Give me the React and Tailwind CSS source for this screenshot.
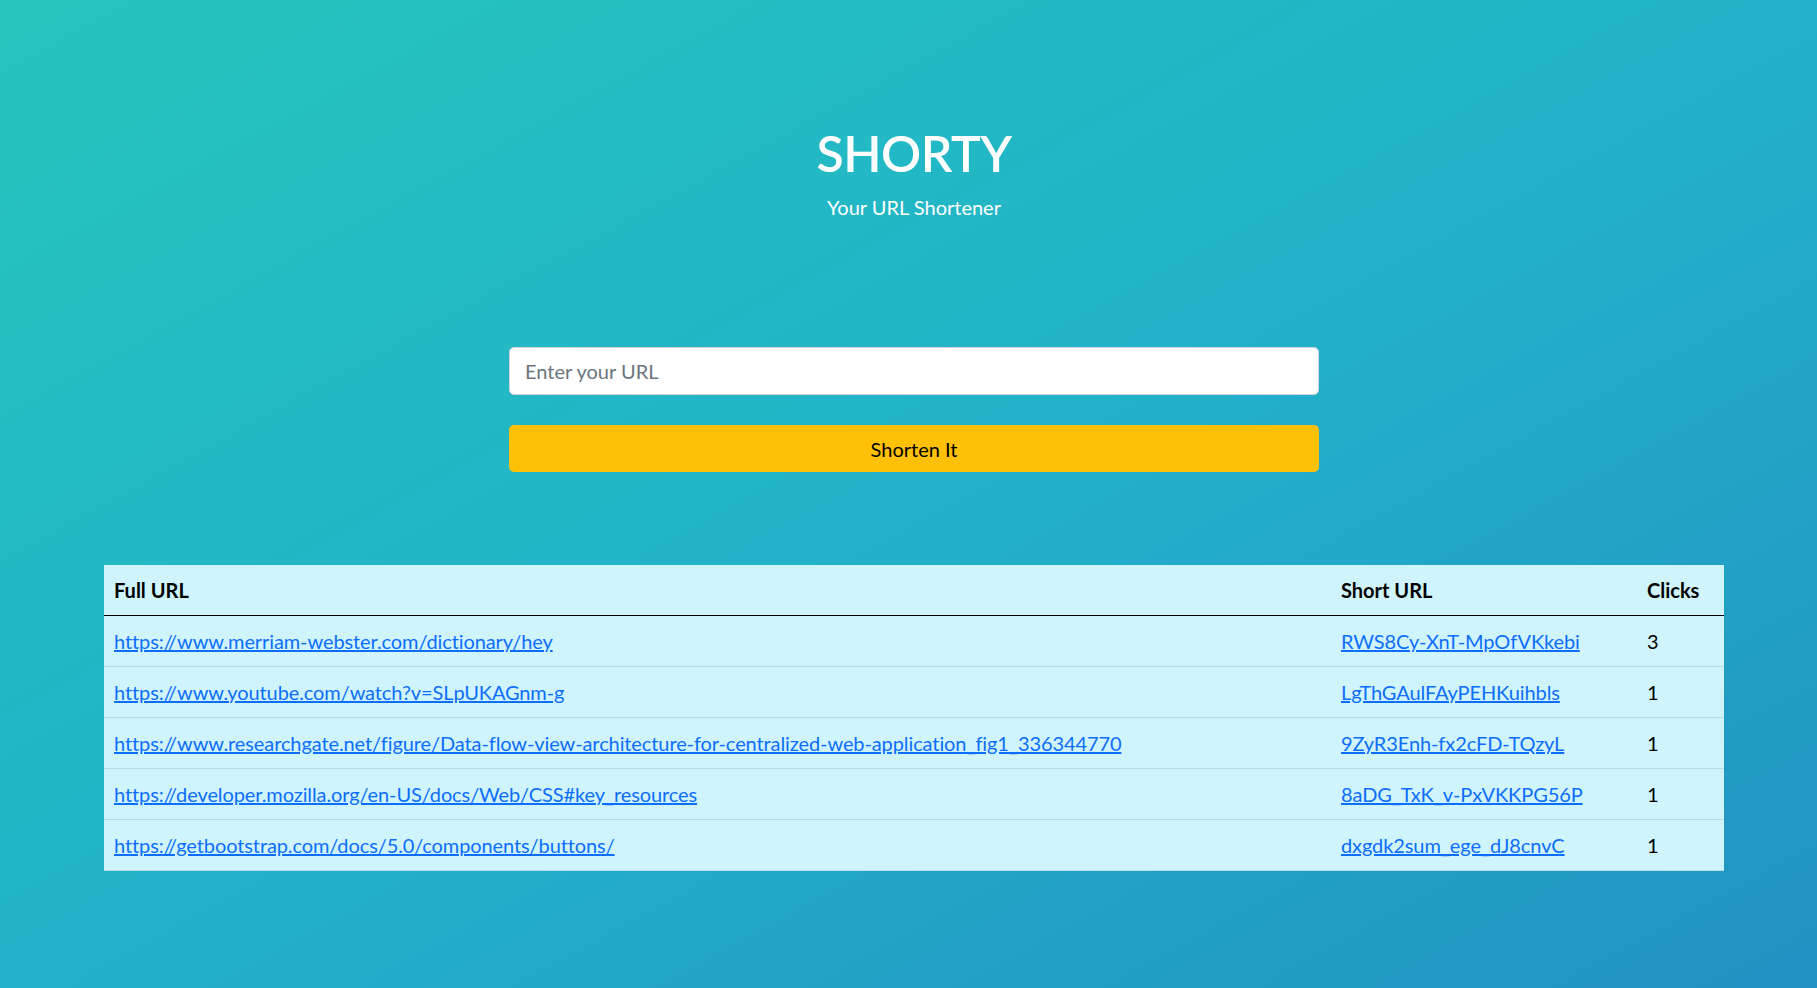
const rows = [
  {
    full: "https://www.merriam-webster.com/dictionary/hey",
    short: "RWS8Cy-XnT-MpOfVKkebi",
    clicks: 3,
  },
  {
    full: "https://www.youtube.com/watch?v=SLpUKAGnm-g",
    short: "LgThGAulFAyPEHKuihbls",
    clicks: 1,
  },
  {
    full: "https://www.researchgate.net/figure/Data-flow-view-architecture-for-centralized-web-application_fig1_336344770",
    short: "9ZyR3Enh-fx2cFD-TQzyL",
    clicks: 1,
  },
  {
    full: "https://developer.mozilla.org/en-US/docs/Web/CSS#key_resources",
    short: "8aDG_TxK_v-PxVKKPG56P",
    clicks: 1,
  },
  {
    full: "https://getbootstrap.com/docs/5.0/components/buttons/",
    short: "dxgdk2sum_ege_dJ8cnvC",
    clicks: 1,
  },
];

export default function App() {
  return (
    <div className="min-h-screen bg-[linear-gradient(to_bottom_right,#25c4bc_0%,#22b2ca_50%,#2192c2_100%)] font-['Lato','Liberation_Sans',sans-serif] text-[20px]">
      <div className="w-[1620px] ml-[104px] pt-[123px] pb-10">
        {/* Header */}
        <header className="text-center text-white">
          <h1 className="text-[50px] leading-[60px] font-semibold tracking-[-0.5px]">SHORTY</h1>
          <p className="mt-[9px] leading-[30px]">Your URL Shortener</p>
        </header>

        {/* Form */}
        <form className="w-[810px] mx-auto mt-[125px] flex flex-col gap-[30px]">
          <input
            type="text"
            placeholder="Enter your URL"
            className="h-[48px] w-full bg-white border border-[#ced4da] rounded-[5px] px-[15px] text-[20px] text-[#212529] placeholder:text-[#6c757d] outline-none"
          />
          <button
            type="button"
            className="h-[47px] w-full bg-[#ffc107] rounded-[5px] text-[20px] text-black"
          >
            Shorten It
          </button>
        </form>

        {/* Table */}
        <table className="w-full mt-[93px] bg-[#cff4fc] border-collapse text-left">
          <thead>
            <tr className="h-[50px] border-b border-black">
              <th className="px-[10px] font-bold text-black w-[1227px]">Full URL</th>
              <th className="px-[10px] font-bold text-black w-[306px]">Short URL</th>
              <th className="px-[10px] font-bold text-black">Clicks</th>
            </tr>
          </thead>
          <tbody className="tracking-[-0.1px]">
            {rows.map((r) => (
              <tr key={r.short} className="h-[51px] border-b border-[#badce3]">
                <td className="px-[10px]">
                  <a href="#" className="text-[#0d6efd] underline">{r.full}</a>
                </td>
                <td className="px-[10px]">
                  <a href="#" className="text-[#0d6efd] underline">{r.short}</a>
                </td>
                <td className="px-[10px] text-black">{r.clicks}</td>
              </tr>
            ))}
          </tbody>
        </table>
      </div>
    </div>
  );
}
